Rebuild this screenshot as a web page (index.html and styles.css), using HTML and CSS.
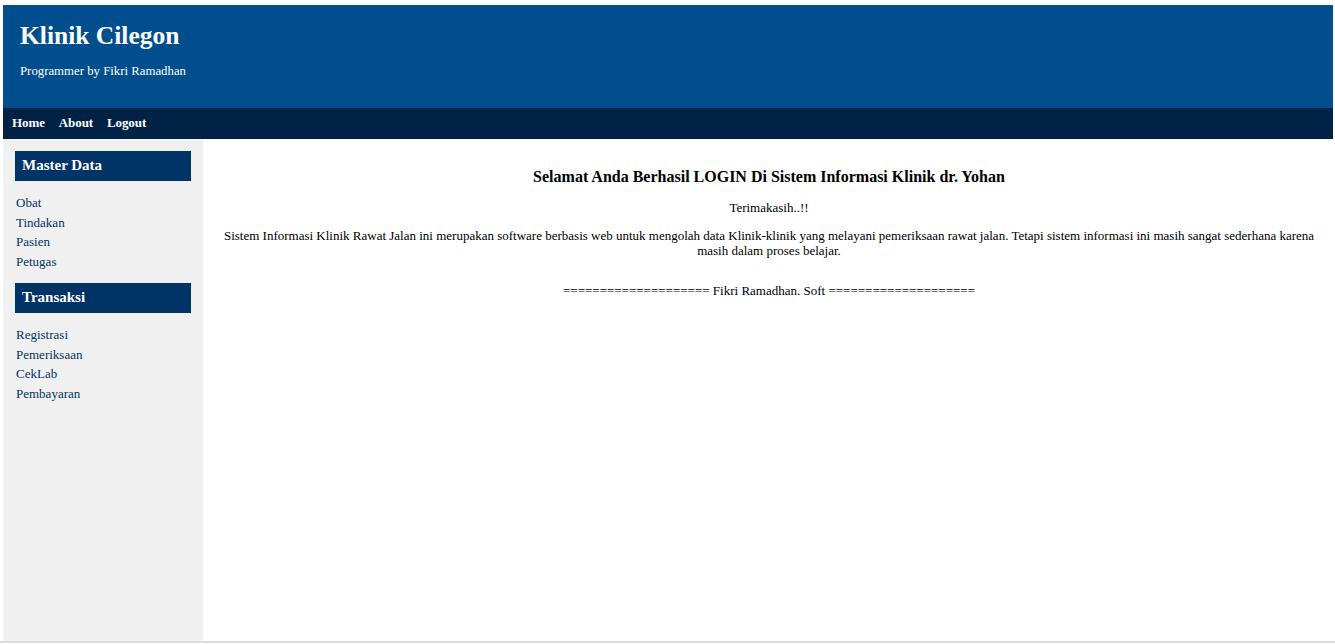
FILE: index.html
```html
<!DOCTYPE html>
<html>
<head>
<meta charset="utf-8">
<title>Klinik Cilegon</title>
<link rel="stylesheet" href="styles.css">
</head>
<body>
<div class="wrap">
  <header class="header">
    <h1 class="title">Klinik Cilegon</h1>
    <p class="subtitle">Programmer by Fikri Ramadhan</p>
  </header>
  <nav class="nav">
    <a href="#">Home</a>
    <a href="#">About</a>
    <a href="#">Logout</a>
  </nav>
  <div class="body">
    <aside class="sidebar">
      <h2 class="side-head">Master Data</h2>
      <ul class="side-list">
        <li><a href="#">Obat</a></li>
        <li><a href="#">Tindakan</a></li>
        <li><a href="#">Pasien</a></li>
        <li><a href="#">Petugas</a></li>
      </ul>
      <h2 class="side-head">Transaksi</h2>
      <ul class="side-list">
        <li><a href="#">Registrasi</a></li>
        <li><a href="#">Pemeriksaan</a></li>
        <li><a href="#">CekLab</a></li>
        <li><a href="#">Pembayaran</a></li>
      </ul>
    </aside>
    <main class="content">
      <h3 class="welcome">Selamat Anda Berhasil LOGIN Di Sistem Informasi Klinik dr. Yohan</h3>
      <p class="txt">Terimakasih..!!</p>
      <p class="txt">Sistem Informasi Klinik Rawat Jalan ini merupakan software berbasis web untuk mengolah data Klinik-klinik yang melayani pemeriksaan rawat jalan. Tetapi sistem informasi ini masih sangat sederhana karena masih dalam proses belajar.</p>
      <p class="txt sign">==================== Fikri Ramadhan. Soft ====================</p>
    </main>
  </div>
</div>
<div class="foot"></div>
</body>
</html>
```
FILE: styles.css
```css
html, body {
  margin: 0;
  padding: 0;
  background: #ffffff;
}
body {
  font-family: "Liberation Serif", "Times New Roman", serif;
  font-size: 13px;
  color: #000;
  overflow: hidden;
}
.wrap {
  margin: 5px 2px 0 3px;
}
.header {
  background: #004e8d;
  color: #fff;
  height: 103px;
  padding: 0 17px;
  box-sizing: border-box;
  overflow: hidden;
}
.title {
  margin: 0;
  padding-top: 15px;
  font-size: 25.5px;
  font-weight: bold;
  line-height: 32px;
}
.subtitle {
  margin: 11px 0 0 0;
  font-size: 12.8px;
  line-height: 16px;
}
.nav {
  background: #002244;
  height: 31px;
  display: flex;
  align-items: center;
  padding-left: 9px;
  padding-bottom: 2px;
  box-sizing: border-box;
  gap: 14px;
}
.nav a {
  color: #fff;
  font-weight: bold;
  font-size: 13px;
  letter-spacing: -0.1px;
  text-decoration: none;
}
.body {
  display: flex;
  height: 502px;
}
.sidebar {
  width: 200px;
  flex: none;
  background: #f0f0f0;
  padding: 12px 12px 0 12px;
  box-sizing: border-box;
}
.side-head {
  margin: 0;
  background: #003366;
  color: #fff;
  font-size: 15px;
  font-weight: bold;
  height: 30px;
  line-height: 28px;
  padding-left: 7px;
}
.side-list {
  list-style: none;
  margin: 12px 0 11px 0;
  padding: 0 0 0 1px;
}
.side-list li {
  line-height: 19.7px;
  font-size: 13px;
}
.side-list a {
  color: #003366;
  text-decoration: none;
}
.content {
  flex: 1;
  padding: 0 12px 0 14px;
  text-align: center;
}
.welcome {
  margin: 28px 0 0 0;
  font-size: 16px;
  font-weight: bold;
  line-height: 20px;
}
.txt {
  margin: 13px 0 0 0;
  line-height: 15px;
}
.sign {
  margin-top: 25px;
}
.foot {
  height: 2px;
  background: #dddddd;
}
```
